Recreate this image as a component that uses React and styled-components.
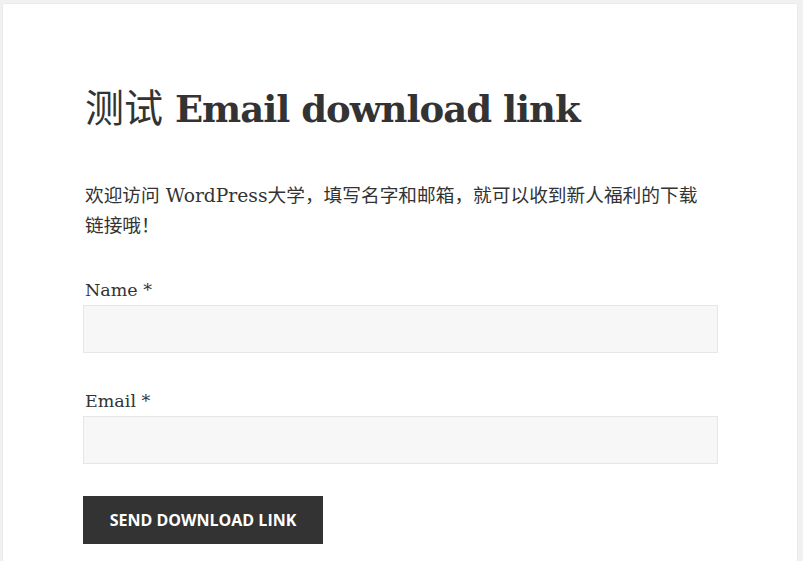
import React from 'react'
import styled, { createGlobalStyle } from 'styled-components'

const GlobalStyle = createGlobalStyle`
  html, body {
    margin: 0;
    padding: 0;
    background: #f1f1f1;
  }
  body {
    font-family: "DejaVu Serif", "Noto Sans CJK SC", serif;
    color: #333333;
  }
`

const Page = styled.div`
  padding: 4px 6px 0 3px;
  min-height: 561px;
  box-sizing: border-box;
`

const Card = styled.article`
  background: #ffffff;
  box-shadow: 0 0 1px rgba(0, 0, 0, 0.15);
  padding: 82px 79px 40px 80px;
  min-height: 557px;
  box-sizing: border-box;
`

const Title = styled.h1`
  margin: 0 0 48px;
  font-size: 37px;
  line-height: 46.8px;
  font-weight: 700;
  letter-spacing: -1px;
  color: #333333;
  font-family: "DejaVu Serif", "Noto Sans CJK SC", serif;
`

const Cjk = styled.span`
  font-weight: 400;
  font-size: 39px;
  letter-spacing: 0;
  margin-left: 2px;
`

const Intro = styled.p`
  margin: 0 0 35px 2px;
  font-size: 18.7px;
  line-height: 30.6px;
  color: #333333;
`

const Form = styled.form`
  display: flex;
  flex-direction: column;
`

const Field = styled.div`
  display: flex;
  flex-direction: column;
  gap: 2px;
  margin-bottom: ${p => p.$last ? '32px' : '35px'};
`

const Label = styled.label`
  font-size: 17.5px;
  line-height: 26.25px;
  margin-left: 2px;
  color: #333333;
`

const Input = styled.input`
  box-sizing: border-box;
  height: 48px;
  width: 100%;
  background: #f7f7f7;
  border: 1px solid #e6e6e6;
  border-radius: 0;
  padding: 8px 12px;
  font: inherit;
  outline: none;
`

const Button = styled.button`
  align-self: flex-start;
  box-sizing: border-box;
  height: 48px;
  width: 240px;
  background: #333333;
  color: #ffffff;
  border: 0;
  border-radius: 0;
  font-family: "Open Sans", "Noto Sans", sans-serif;
  font-weight: 700;
  font-size: 16px;
  text-transform: uppercase;
  letter-spacing: 0;
  cursor: pointer;
`

export default function App() {
  return (
    <>
      <GlobalStyle />
      <Page>
        <Card>
          <Title><Cjk>测试</Cjk> Email download link</Title>
          <Intro>
            欢迎访问 WordPress大学，填写名字和邮箱，就可以收到新人福利的下载<br />链接哦！
          </Intro>
          <Form onSubmit={e => e.preventDefault()}>
            <Field>
              <Label htmlFor="edl-name">Name *</Label>
              <Input id="edl-name" type="text" />
            </Field>
            <Field $last>
              <Label htmlFor="edl-email">Email *</Label>
              <Input id="edl-email" type="email" />
            </Field>
            <Button type="submit">Send Download Link</Button>
          </Form>
        </Card>
      </Page>
    </>
  )
}
